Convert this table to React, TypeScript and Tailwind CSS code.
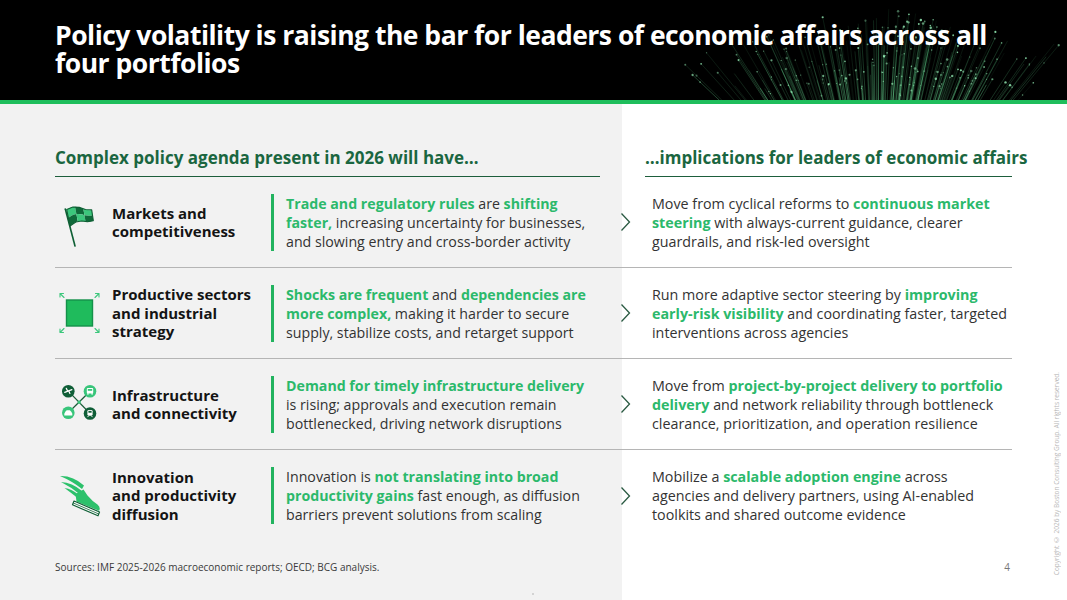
import React from "react";

function rng(seed: number) {
  let a = seed;
  return () => {
    a |= 0;
    a = (a + 0x6d2b79f5) | 0;
    let t = Math.imul(a ^ (a >>> 15), 1 | a);
    t = (t + Math.imul(t ^ (t >>> 7), 61 | t)) ^ t;
    return ((t ^ (t >>> 14)) >>> 0) / 4294967296;
  };
}

type Line = { x1: number; y1: number; x2: number; y2: number; o: number; w: number };
type Dot = { cx: number; cy: number; r: number; o: number };

const FIBERS = (() => {
  const r = rng(20260);
  const lines: Line[] = [];
  const dots: Dot[] = [];
  for (let i = 0; i < 240; i++) {
    const s = (r() + r() + r() - 1.5) / 1.5;
    const bx = 878 + s * 185;
    const ang = s * 0.95;
    const h = (14 + r() * 80) * (1 - 0.55 * Math.abs(s));
    const L = h / Math.cos(ang);
    const ex = bx + Math.sin(ang) * L;
    const ey = 100 - Math.cos(ang) * L;
    lines.push({ x1: bx, y1: 100, x2: ex, y2: ey, o: 0.15 + r() * 0.4, w: 0.35 + r() * 0.45 });
    if (r() < 0.6) dots.push({ cx: ex, cy: ey, r: 0.5 + r() * 0.8, o: 0.35 + r() * 0.5 });
    if (r() < 0.3) {
      const f = 0.2 + r() * 0.6;
      dots.push({ cx: bx + (ex - bx) * f, cy: 100 + (ey - 100) * f, r: 0.5 + r() * 0.6, o: 0.3 + r() * 0.4 });
    }
  }
  return { lines, dots };
})();

function FiberBurst() {
  return (
    <svg className="absolute inset-0 w-full h-full" viewBox="0 0 1067 100" preserveAspectRatio="none">
      <defs>
        <linearGradient id="fg" gradientUnits="userSpaceOnUse" x1="0" y1="100" x2="0" y2="10">
          <stop offset="0" stopColor="#6fe39b" stopOpacity="0.95" />
          <stop offset="1" stopColor="#46c278" stopOpacity="0.45" />
        </linearGradient>
        <radialGradient id="glow" cx="0.5" cy="1" r="0.6">
          <stop offset="0" stopColor="#1f9a55" stopOpacity="0.28" />
          <stop offset="1" stopColor="#1f9a55" stopOpacity="0" />
        </radialGradient>
      </defs>
      <ellipse cx="878" cy="104" rx="170" ry="40" fill="url(#glow)" />
      {FIBERS.lines.map((l, i) => (
        <line key={i} x1={l.x1} y1={l.y1} x2={l.x2} y2={l.y2} stroke="url(#fg)" strokeOpacity={l.o} strokeWidth={l.w} />
      ))}
      {FIBERS.dots.map((d, i) => (
        <circle key={i} cx={d.cx} cy={d.cy} r={d.r} fill="#9af5bc" fillOpacity={d.o} />
      ))}
    </svg>
  );
}

function FlagIcon() {
  const LT = [9.7, 13.5];
  const RT = [34.7, 11.8];
  const RB = [36.3, 22.5];
  const LB = [13, 30];
  const P = (u: number, v: number) => {
    const w = -2.2 * Math.sin(Math.PI * u * 1.6);
    const tx = LT[0] + (RT[0] - LT[0]) * u;
    const ty = LT[1] + (RT[1] - LT[1]) * u + w;
    const bx = LB[0] + (RB[0] - LB[0]) * u;
    const by = LB[1] + (RB[1] - LB[1]) * u + w;
    return [tx + (bx - tx) * v, ty + (by - ty) * v];
  };
  const cellPts = (u0: number, u1: number, v0: number, v1: number) => {
    const pts: number[][] = [];
    const n = 4;
    for (let k = 0; k <= n; k++) pts.push(P(u0 + ((u1 - u0) * k) / n, v0));
    for (let k = 0; k <= n; k++) pts.push(P(u1 - ((u1 - u0) * k) / n, v1));
    return pts.map((p) => p.map((q) => q.toFixed(2)).join(",")).join(" ");
  };
  const cells = [];
  for (let c = 0; c < 3; c++)
    for (let rr = 0; rr < 2; rr++)
      cells.push(
        <polygon
          key={`${c}-${rr}`}
          points={cellPts(c / 3, (c + 1) / 3, rr / 2, (rr + 1) / 2)}
          fill={(c + rr) % 2 === 0 ? "#3cc77c" : "#0f6a3a"}
        />
      );
  return (
    <svg width="44" height="52" viewBox="0 0 44 52">
      {cells}
      <polygon points={cellPts(0, 1, 0, 1)} fill="none" stroke="#0e5f34" strokeWidth="1.1" strokeLinejoin="round" />
      <line x1="8.3" y1="13" x2="18" y2="50" stroke="#0e5f34" strokeWidth="1.6" strokeLinecap="round" />
    </svg>
  );
}

function ExpandIcon() {
  const c = "#3cc77c";
  return (
    <svg width="44" height="48" viewBox="0 0 44 48">
      <rect x="9.5" y="11" width="26" height="26" fill="#1fbb5c" stroke="#14914a" strokeWidth="1.4" />
      <g stroke={c} strokeWidth="1.1" fill="none" strokeLinecap="round">
        <path d="M7 8.5 L3 4.5 M3 4.5 L3 8 M3 4.5 L6.5 4.5" />
        <path d="M38 8.5 L42 4.5 M42 4.5 L42 8 M42 4.5 L38.5 4.5" />
        <path d="M7 39.5 L3 43.5 M3 43.5 L3 40 M3 43.5 L6.5 43.5" />
        <path d="M38 39.5 L42 43.5 M42 43.5 L42 40 M42 43.5 L38.5 43.5" />
      </g>
    </svg>
  );
}

function NetworkIcon() {
  const dark = "#0f5e37";
  const light = "#38c57a";
  return (
    <svg width="44" height="48" viewBox="0 0 44 48">
      <g stroke="#1a5c38" strokeWidth="1.2">
        <line x1="11.3" y1="11.2" x2="33" y2="33.5" />
        <line x1="33" y1="11.2" x2="11.3" y2="32.8" />
      </g>
      <rect x="20.7" y="20.7" width="3" height="3" fill={light} />
      <circle cx="11.3" cy="11.2" r="6.3" fill={dark} />
      <circle cx="33" cy="11.2" r="6.3" fill={light} />
      <circle cx="11.3" cy="32.8" r="6.3" fill={light} />
      <circle cx="33" cy="33.5" r="6.3" fill={dark} />
      <g transform="translate(11.3 11.2)" stroke="#fff" strokeWidth="1.2" strokeLinecap="round" fill="none">
        <path d="M-3.6 1.2 L3.6 -1.6 M-0.6 -0.1 L-2 -2.8 M0.4 -0.5 L1.6 2.2" />
      </g>
      <g transform="translate(33 11.2)" fill="#fff">
        <rect x="-3.2" y="-3.2" width="6.4" height="5.4" rx="1" />
        <rect x="-2.2" y="-2.2" width="4.4" height="1.8" fill={light} />
        <rect x="-2.8" y="2" width="1.4" height="1.4" />
        <rect x="1.4" y="2" width="1.4" height="1.4" />
      </g>
      <g transform="translate(11.3 32.8)" fill="#fff">
        <path d="M-4 1 L-3 -1 L-1.6 -2.6 L1.6 -2.6 L3 -1 L4 1 L4 2.6 L-4 2.6 Z" />
      </g>
      <g transform="translate(33 33.5)" fill="#fff">
        <rect x="-2.6" y="-3.6" width="5.2" height="5.8" rx="1.4" />
        <rect x="-1.6" y="-2.6" width="3.2" height="1.8" fill={dark} />
        <path d="M-2.4 3.6 L-1.4 2.2 M2.4 3.6 L1.4 2.2" stroke="#fff" strokeWidth="0.9" />
      </g>
    </svg>
  );
}

function ShoeIcon() {
  const g = "#2cc16b";
  const d = "#0f5f35";
  return (
    <svg width="44" height="48" viewBox="0 0 44 48">
      <path d="M3 4 Q16 3.5 27 13.5 L25 17 Q15 9 3 4 Z" fill={g} />
      <path d="M4 10 Q15 10.5 25 19 L23 22.5 Q14 15 4 10 Z" fill={g} />
      <path d="M7.5 16 Q15 17 22 23 L20 25.5 Q13 20 7.5 16 Z" fill={g} />
      <path d="M18.5 22 L26.5 17.5 L30.5 23.5 Q35.5 29.5 40.5 32.5 Q44 35.5 42 38.8 L19.5 29.5 Z" fill={g} />
      <path d="M17 29 L42.5 40 L41 43.8 L15.5 32.8 Z" fill="#ffffff" stroke={d} strokeWidth="1.2" strokeLinejoin="round" />
      <line x1="16.4" y1="31" x2="41.8" y2="42" stroke={d} strokeWidth="0.8" />
    </svg>
  );
}

function Chevron() {
  return (
    <svg width="11" height="20" viewBox="0 0 11 20">
      <polyline points="1.5,1.5 9.5,10 1.5,18.5" fill="none" stroke="#2a5a42" strokeWidth="1.3" />
    </svg>
  );
}

const G = ({ children }: { children: React.ReactNode }) => (
  <span className="font-bold text-[#2bb96b]">{children}</span>
);

type Seg = React.ReactNode;
type Row = {
  icon: React.ReactNode;
  title: string[];
  left: Seg[][];
  right: Seg[][];
};

const ROWS: Row[] = [
  {
    icon: <FlagIcon />,
    title: ["Markets and", "competitiveness"],
    left: [
      [<G key="a">Trade and regulatory rules</G>, " are ", <G key="b">shifting</G>],
      [<G key="a">faster,</G>, " increasing uncertainty for businesses,"],
      ["and slowing entry and cross-border activity"],
    ],
    right: [
      ["Move from cyclical reforms to ", <G key="a">continuous market</G>],
      [<G key="a">steering</G>, " with always-current guidance, clearer"],
      ["guardrails, and risk-led oversight"],
    ],
  },
  {
    icon: <ExpandIcon />,
    title: ["Productive sectors", "and industrial", "strategy"],
    left: [
      [<G key="a">Shocks are frequent</G>, " and ", <G key="b">dependencies are</G>],
      [<G key="a">more complex,</G>, " making it harder to secure"],
      ["supply, stabilize costs, and retarget support"],
    ],
    right: [
      ["Run more adaptive sector steering by ", <G key="a">improving</G>],
      [<G key="a">early-risk visibility</G>, " and coordinating faster, targeted"],
      ["interventions across agencies"],
    ],
  },
  {
    icon: <NetworkIcon />,
    title: ["Infrastructure", "and connectivity"],
    left: [
      [<G key="a">Demand for timely infrastructure delivery</G>],
      ["is rising; approvals and execution remain"],
      ["bottlenecked, driving network disruptions"],
    ],
    right: [
      ["Move from ", <G key="a">project-by-project delivery to portfolio</G>],
      [<G key="a">delivery</G>, " and network reliability through bottleneck"],
      ["clearance, prioritization, and operation resilience"],
    ],
  },
  {
    icon: <ShoeIcon />,
    title: ["Innovation", "and productivity", "diffusion"],
    left: [
      ["Innovation is ", <G key="a">not translating into broad</G>],
      [<G key="a">productivity gains</G>, " fast enough, as diffusion"],
      ["barriers prevent solutions from scaling"],
    ],
    right: [
      ["Mobilize a ", <G key="a">scalable adoption engine</G>, " across"],
      ["agencies and delivery partners, using AI-enabled"],
      ["toolkits and shared outcome evidence"],
    ],
  },
];

export default function App() {
  return (
    <div className="relative w-[1067px] h-[600px] overflow-hidden bg-white font-['Open_Sans',sans-serif]">
      <header className="relative h-[100px] bg-black overflow-hidden">
        <FiberBurst />
        <h1 className="relative pl-[55px] pt-[21px] text-white font-bold text-[26.5px] leading-[28px] tracking-[-0.5px] [font-stretch:90%] whitespace-nowrap">
          Policy volatility is raising the bar for leaders of economic affairs across all
          <br />
          four portfolios
        </h1>
      </header>
      <div className="h-[4px] bg-[#1fbe5c]" />
      <main className="relative h-[496px] pl-[55px] bg-[linear-gradient(90deg,#f2f2f2_622px,#ffffff_622px)]">
        <div className="grid grid-cols-[545px_45px_367px] pt-[43px]">
          <div className="border-b border-[#1d5e3c] pb-[7px] text-[17px] leading-[22px] font-bold text-[#1a6640] whitespace-nowrap">
            Complex policy agenda present in 2026 will have…
          </div>
          <div />
          <div className="border-b border-[#1d5e3c] pb-[7px] text-[17px] leading-[22px] font-bold text-[#1a6640] whitespace-nowrap">
            …implications for leaders of economic affairs
          </div>
        </div>
        <div className="w-[957px]">
          {ROWS.map((row, i) => (
            <div
              key={i}
              className={`grid grid-cols-[57px_159px_341px_40px_360px] items-center h-[91px] ${
                i < ROWS.length - 1 ? "border-b border-[#b5b5b5]" : ""
              }`}
            >
              <div className="pl-[2px] flex items-center">{row.icon}</div>
              <div className="text-[15px] leading-[18.5px] font-bold text-[#141414]">
                {row.title.map((t, k) => (
                  <div key={k} className="whitespace-nowrap">
                    {t}
                  </div>
                ))}
              </div>
              <div className="border-l-[3px] border-[#22b35f] pl-[12px] text-[14.2px] leading-[19px] text-[#333333]">
                {row.left.map((l, k) => (
                  <div key={k} className="whitespace-nowrap">
                    {l}
                  </div>
                ))}
              </div>
              <div className="pl-[8px] flex items-center">
                <Chevron />
              </div>
              <div className="text-[14.3px] leading-[19px] text-[#333333]">
                {row.right.map((l, k) => (
                  <div key={k} className="whitespace-nowrap">
                    {l}
                  </div>
                ))}
              </div>
            </div>
          ))}
        </div>
        <div className="mt-[19px] w-[957px] flex justify-between text-[10px] leading-[14px] text-[#3a3a3a]">
          <span>Sources: IMF 2025-2026 macroeconomic reports; OECD; BCG analysis.</span>
          <span className="pr-[2px] text-[#777]">4</span>
        </div>
        <div className="absolute right-[6px] bottom-[25px] [writing-mode:vertical-rl] rotate-180 text-[6.5px] leading-[9px] text-[#b8b8b8] whitespace-nowrap">
          Copyright © 2026 by Boston Consulting Group. All rights reserved.
        </div>
        <div className="absolute left-[532px] bottom-[5px] w-[2px] h-[2px] rounded-full bg-[#c8c8c8]" />
      </main>
    </div>
  );
}
